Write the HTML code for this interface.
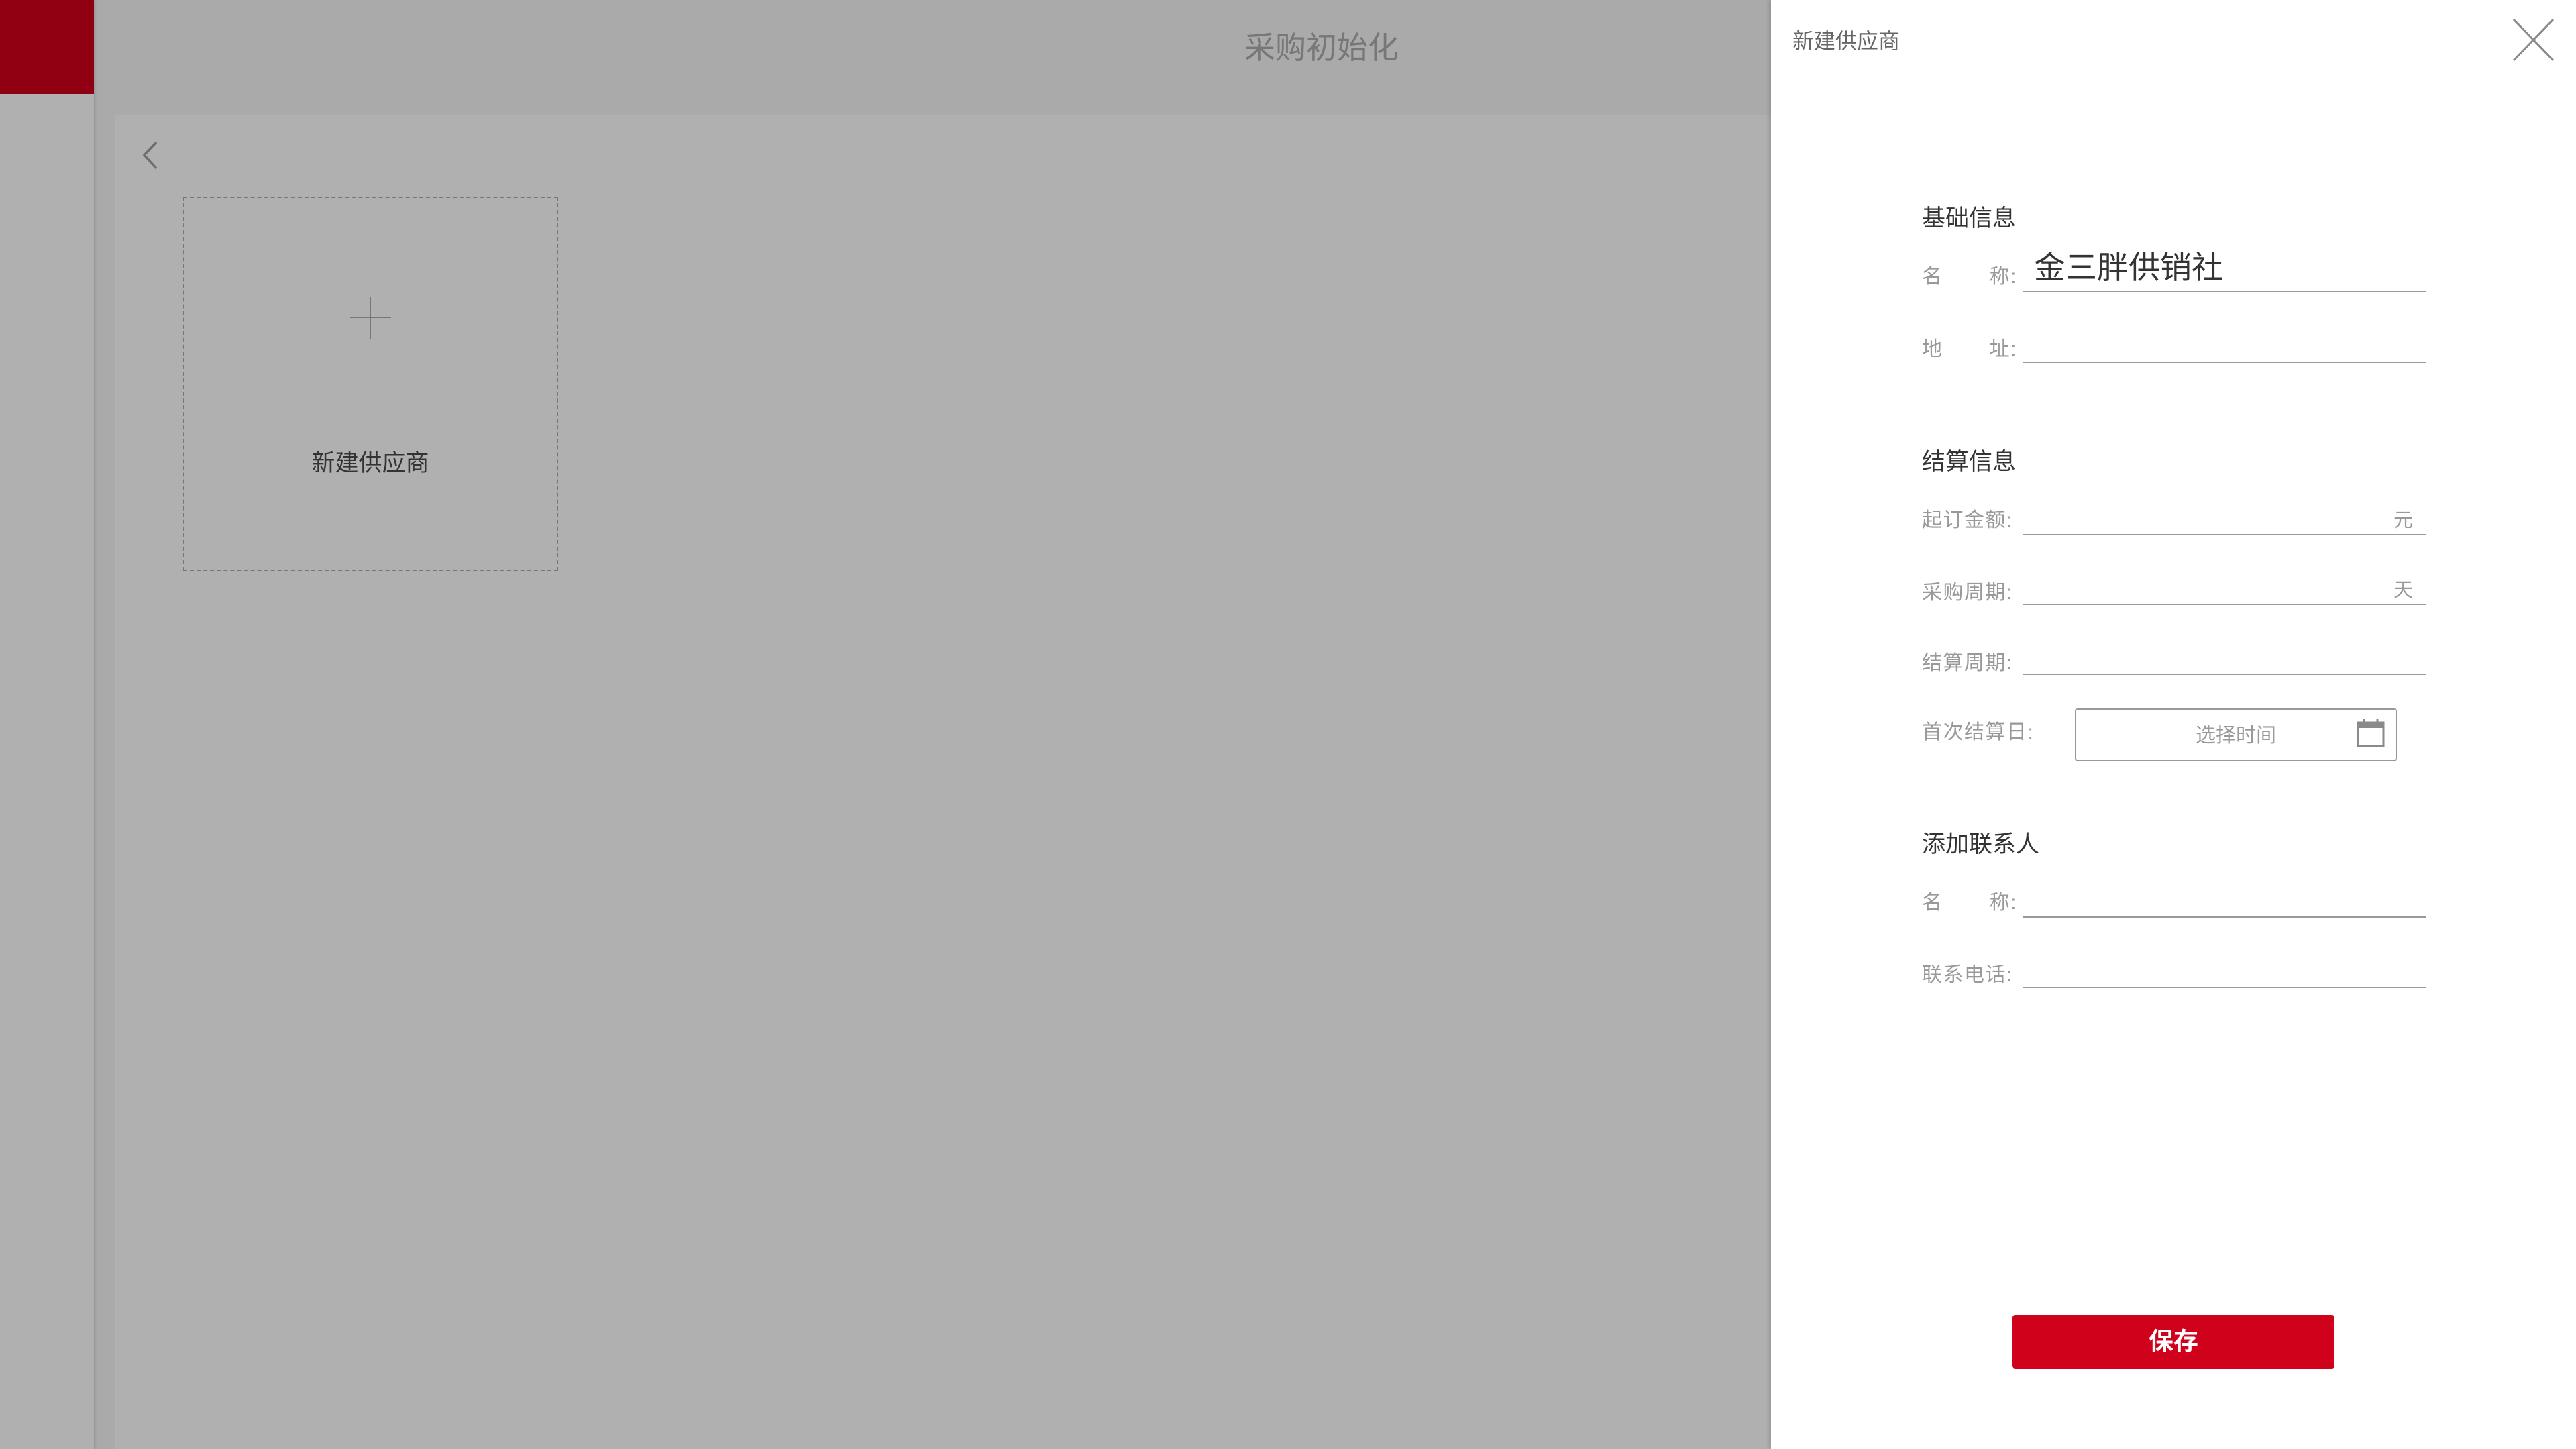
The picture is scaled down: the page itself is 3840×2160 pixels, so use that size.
<!DOCTYPE html>
<html><head><meta charset="utf-8"><style>
*{margin:0;padding:0;box-sizing:border-box}
body{width:3840px;height:2160px;overflow:hidden;position:relative;background:#aaaaaa;font-family:"Liberation Sans","Noto Sans CJK SC",sans-serif}
.a{position:absolute}
.lbl{position:absolute;left:2865px;width:142px;font-size:30px;letter-spacing:1.5px;color:#999;display:flex;justify-content:space-between;line-height:1;white-space:nowrap}
.line{position:absolute;left:3015px;width:602px;height:2px;background:#999}
.sec{position:absolute;left:2865px;font-size:35px;color:#333;line-height:1}
.unit{position:absolute;left:3568px;font-size:29px;color:#999;line-height:1}
</style></head><body>
<div class="a" style="left:0;top:0;width:140px;height:2160px;background:#b0b0b0;box-shadow:2px 0 4px rgba(0,0,0,0.12)"></div>
<div class="a" style="left:0;top:0;width:140px;height:140px;background:#910012"></div>
<div class="a" style="left:172px;top:172px;width:2468px;height:1988px;background:#b0b0b0"></div>
<div class="a" style="left:1850px;top:48px;width:240px;text-align:center;font-size:46px;color:#777;line-height:1">采购初始化</div>
<svg class="a" style="left:205px;top:208px" width="40" height="48"><path d="M28 4 L10 23 L28 43" fill="none" stroke="#6f6f6f" stroke-width="3.5"/></svg>
<div class="a" style="left:273px;top:293px;width:559px;height:558px;border:2px dashed #777"></div>
<div class="a" style="left:551px;top:443px;width:2px;height:62px;background:#777"></div>
<div class="a" style="left:521px;top:472px;width:62px;height:2px;background:#777"></div>
<div class="a" style="left:400px;top:673px;width:304px;text-align:center;font-size:35px;color:#333;line-height:1">新建供应商</div>

<div class="a" style="left:2640px;top:0;width:1200px;height:2160px;background:#fff;box-shadow:-3px 0 6px rgba(0,0,0,0.15)"></div>
<div class="a" style="left:2672px;top:45px;font-size:32px;color:#666;line-height:1">新建供应商</div>
<svg class="a" style="left:3744px;top:26px" width="66" height="68"><path d="M3 3 L62 64 M62 3 L3 64" stroke="#8a8a8a" stroke-width="3"/></svg>

<div class="sec" style="top:308px">基础信息</div>
<div class="lbl" style="top:398px"><span>名</span><span>称:</span></div>
<div class="a" style="left:3032px;top:375px;font-size:47px;color:#333;line-height:1">金三胖供销社</div>
<div class="line" style="top:434px"></div>
<div class="lbl" style="top:506px"><span>地</span><span>址:</span></div>
<div class="line" style="top:539px"></div>

<div class="sec" style="top:671px">结算信息</div>
<div class="lbl" style="top:761px"><span>起订金额:</span></div>
<div class="unit" style="top:762px">元</div>
<div class="line" style="top:796px"></div>
<div class="lbl" style="top:869px"><span>采购周期:</span></div>
<div class="unit" style="top:866px">天</div>
<div class="line" style="top:900px"></div>
<div class="lbl" style="top:974px"><span>结算周期:</span></div>
<div class="line" style="top:1004px"></div>
<div class="lbl" style="top:1077px;width:180px"><span>首次结算日:</span></div>
<div class="a" style="left:3093px;top:1056px;width:480px;height:79px;border:2px solid #999;border-radius:4px"></div>
<div class="a" style="left:3233px;top:1082px;width:200px;text-align:center;font-size:30px;color:#999;line-height:1">选择时间</div>
<svg class="a" style="left:3512px;top:1070px" width="44" height="46"><rect x="3" y="7" width="38" height="35" fill="none" stroke="#8a8a8a" stroke-width="3"/><rect x="3" y="7" width="38" height="8" fill="#8a8a8a"/><path d="M12 2V10M32 2V10" stroke="#8a8a8a" stroke-width="3"/></svg>

<div class="sec" style="top:1241px">添加联系人</div>
<div class="lbl" style="top:1331px"><span>名</span><span>称:</span></div>
<div class="line" style="top:1366px"></div>
<div class="lbl" style="top:1439px"><span>联系电话:</span></div>
<div class="line" style="top:1471px"></div>

<div class="a" style="left:3000px;top:1960px;width:480px;height:80px;background:#d0021b;border-radius:4px;color:#fff;font-size:37px;font-weight:bold;text-align:center;line-height:80px">保存</div>
</body></html>
